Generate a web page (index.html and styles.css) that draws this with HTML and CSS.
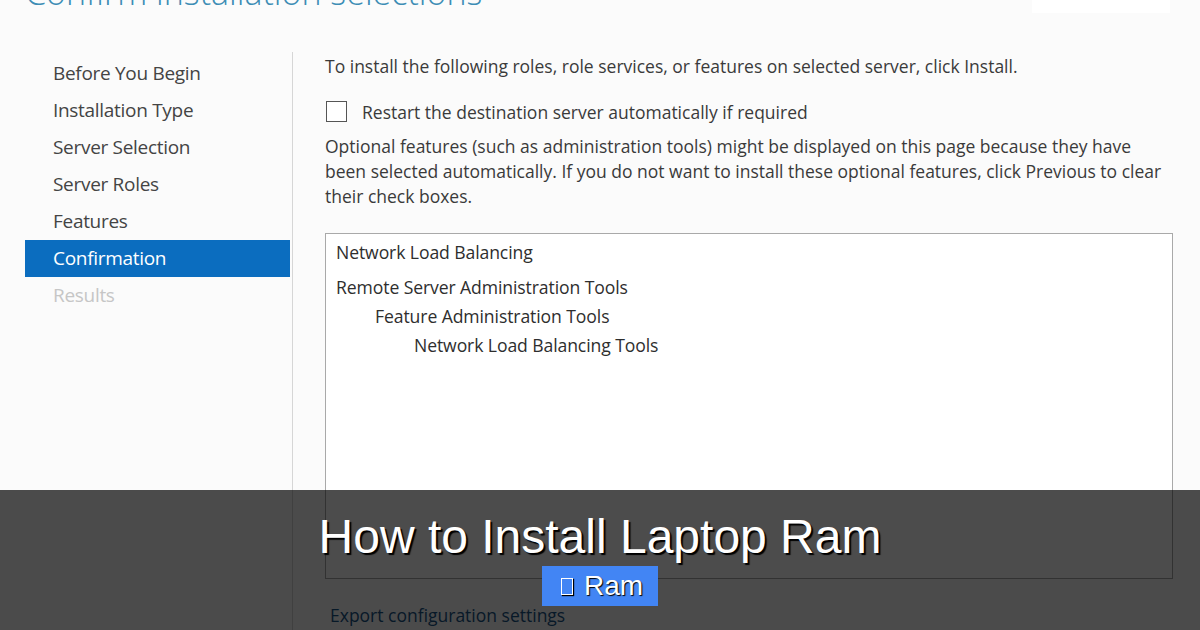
FILE: index.html
```html
<!DOCTYPE html>
<html lang="en">
<head>
  <meta charset="UTF-8">
  <meta name="viewport" content="width=device-width, initial-scale=1.0">
  <title>How to Install Laptop Ram</title>
  <link rel="stylesheet" href="styles.css">
</head>
<body>
  <div class="wizard-page">
    <header class="wizard-header">
      <h1>Confirm installation selections</h1>
      <div class="server-box"></div>
    </header>

    <div class="wizard">
      <aside class="steps">
        <ul>
          <li>Before You Begin</li>
          <li>Installation Type</li>
          <li>Server Selection</li>
          <li>Server Roles</li>
          <li>Features</li>
          <li class="current">Confirmation</li>
          <li class="disabled">Results</li>
        </ul>
      </aside>

      <main class="content">
        <p>To install the following roles, role services, or features on selected server, click Install.</p>
        <label class="restart-option">
          <span class="checkbox"></span>
          Restart the destination server automatically if required
        </label>
        <p class="note">Optional features (such as administration tools) might be displayed on this page because they have been selected automatically. If you do not want to install these optional features, click Previous to clear their check boxes.</p>

        <div class="selection-list">
          <div class="item first">Network Load Balancing</div>
          <div class="item">Remote Server Administration Tools</div>
          <div class="item level-1">Feature Administration Tools</div>
          <div class="item level-2">Network Load Balancing Tools</div>
        </div>

        <a class="export-link" href="#">Export configuration settings</a>
      </main>
    </div>
  </div>

  <div class="caption">
    <h2>How to Install Laptop Ram</h2>
    <span class="tag"><span class="tofu"></span>Ram</span>
  </div>
</body>
</html>
```

FILE: styles.css
```css
body, html {
  margin: 0;
  padding: 0;
  height: 100%;
  overflow: hidden;
}

body {
  background-color: #fbfbfb;
  font-family: "Open Sans", "Noto Sans", sans-serif;
  color: #3a3a3a;
  position: relative;
}

.wizard-header {
  height: 52px;
  display: flex;
  justify-content: space-between;
}

.wizard-header h1 {
  margin: -28px 0 0 25px;
  font-size: 34px;
  font-weight: 300;
  line-height: 40px;
  color: #3d8db5;
  letter-spacing: 0;
  white-space: nowrap;
}

.server-box {
  width: 138px;
  height: 13px;
  margin-right: 30px;
  background-color: #ffffff;
}

.wizard {
  display: flex;
}

.steps {
  width: 265px;
  margin-left: 25px;
  padding-right: 2px;
  border-right: 1px solid #d6d6d6;
  padding-top: 3px;
  height: 600px;
}

.steps ul {
  list-style: none;
  margin: 0;
  padding: 0;
}

.steps li {
  padding-left: 28px;
  line-height: 37px;
  font-size: 19px;
  color: #444;
  letter-spacing: -0.3px;
}

.steps li.current {
  background-color: #0b6dbf;
  color: #fff;
}

.steps li.disabled {
  color: #c6c6c6;
}

.content {
  padding: 2px 0 0 32px;
  font-size: 17.5px;
  width: 850px;
}

.content p {
  margin: 0;
  line-height: 25px;
}

.restart-option {
  display: flex;
  align-items: center;
  gap: 15px;
  height: 25px;
  margin: 20px 0 10px 1px;
  font-size: 17.5px;
}

.checkbox {
  width: 19px;
  height: 19px;
  border: 1px solid #555;
  background-color: #fff;
}

.selection-list {
  margin-top: 24px;
  width: 846px;
  height: 340px;
  padding-top: 4px;
  border: 1px solid #a9a9a9;
  background-color: #fff;
}

.item {
  padding-left: 10px;
  line-height: 29px;
  font-size: 17.6px;
  letter-spacing: -0.1px;
  color: #2e2e2e;
}

.item.first {
  margin-bottom: 6px;
}

.item.level-1 {
  padding-left: 49px;
}

.item.level-2 {
  padding-left: 88px;
}

.export-link {
  display: block;
  margin: 24px 0 0 5px;
  line-height: 25px;
  font-size: 17.5px;
  color: #1a5486;
  text-decoration: none;
}

/* dark band with the article title */
.caption {
  position: absolute;
  left: 0;
  right: 0;
  bottom: 0;
  height: 140px;
  background-color: rgba(0, 0, 0, 0.7);
  display: flex;
  flex-direction: column;
  align-items: center;
  font-family: "Liberation Sans", Arial, sans-serif;
  color: #fff;
}

.caption h2 {
  margin: 17px 0 0;
  font-size: 48px;
  font-weight: 400;
  line-height: 60px;
  text-shadow: 2px 2px 1px #000;
}

.tag {
  display: flex;
  align-items: center;
  gap: 11px;
  height: 40px;
  padding: 0 15px 0 19px;
  margin-top: -1px;
  background-color: #4285f4;
  font-size: 28px;
  text-shadow: 1px 1px 1px #000;
}

.tofu {
  width: 10px;
  height: 15px;
  border: 1px solid #fff;
  box-shadow: 1px 1px 1px #000;
}
```
